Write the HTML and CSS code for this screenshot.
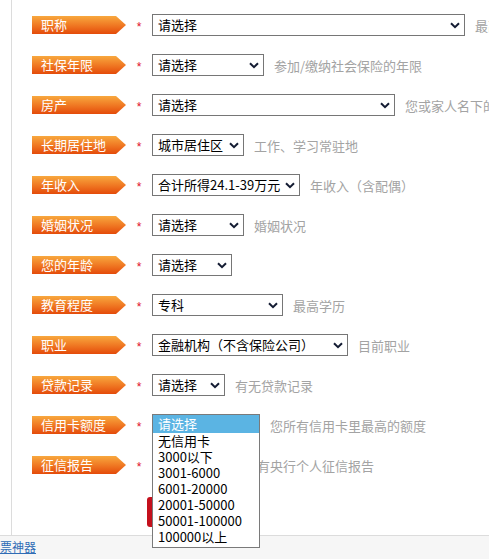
FILE: index.html
```html
<!DOCTYPE html>
<html lang="zh-CN">
<head>
<meta charset="utf-8">
<title>申请信息</title>
<link rel="stylesheet" href="styles.css">
</head>
<body>
<div class="page">
  <form class="form">
    <div class="row">
      <span class="tag">职称</span><span class="star">*</span>
      <select class="sel w313"><option>请选择</option></select>
      <span class="hint">最高职称</span>
    </div>
    <div class="row">
      <span class="tag">社保年限</span><span class="star">*</span>
      <select class="sel w112"><option>请选择</option></select>
      <span class="hint">参加/缴纳社会保险的年限</span>
    </div>
    <div class="row">
      <span class="tag">房产</span><span class="star">*</span>
      <select class="sel w243"><option>请选择</option></select>
      <span class="hint">您或家人名下的房产</span>
    </div>
    <div class="row">
      <span class="tag">长期居住地</span><span class="star">*</span>
      <select class="sel w92"><option>城市居住区</option></select>
      <span class="hint">工作、学习常驻地</span>
    </div>
    <div class="row">
      <span class="tag">年收入</span><span class="star">*</span>
      <select class="sel w148"><option>合计所得24.1-39万元</option></select>
      <span class="hint">年收入（含配偶）</span>
    </div>
    <div class="row">
      <span class="tag">婚姻状况</span><span class="star">*</span>
      <select class="sel w92"><option>请选择</option></select>
      <span class="hint">婚姻状况</span>
    </div>
    <div class="row">
      <span class="tag">您的年龄</span><span class="star">*</span>
      <select class="sel w80"><option>请选择</option></select>
    </div>
    <div class="row">
      <span class="tag">教育程度</span><span class="star">*</span>
      <select class="sel w131"><option>专科</option></select>
      <span class="hint">最高学历</span>
    </div>
    <div class="row">
      <span class="tag">职业</span><span class="star">*</span>
      <select class="sel w196"><option>金融机构（不含保险公司）</option></select>
      <span class="hint">目前职业</span>
    </div>
    <div class="row">
      <span class="tag">贷款记录</span><span class="star">*</span>
      <select class="sel w73"><option>请选择</option></select>
      <span class="hint">有无贷款记录</span>
    </div>
    <div class="row">
      <span class="tag">信用卡额度</span><span class="star">*</span>
      <span class="selwrap">
        <select class="sel w108"><option>请选择</option></select>
        <ul class="listbox">
          <li class="active">请选择</li>
          <li>无信用卡</li>
          <li>3000以下</li>
          <li>3001-6000</li>
          <li>6001-20000</li>
          <li>20001-50000</li>
          <li>50001-100000</li>
          <li>100000以上</li>
        </ul>
      </span>
      <span class="hint">您所有信用卡里最高的额度</span>
    </div>
    <div class="row">
      <span class="tag">征信报告</span><span class="star">*</span>
      <select class="sel w69"><option>请选择</option></select>
      <span class="hint">是否有央行个人征信报告</span>
    </div>
    <div class="actions">
      <button type="button" class="submit" aria-label="提交"></button>
    </div>
  </form>
</div>
<div class="footer"><a href="#" class="flink">票神器</a></div>
</body>
</html>
```

FILE: styles.css
```css
html, body {
  margin: 0;
  padding: 0;
  background: #fff;
  overflow: hidden;
  width: 489px;
  height: 559px;
}
body {
  font-family: "Noto Sans CJK SC", "Liberation Sans", sans-serif;
  font-size: 13px;
  color: #000;
}
.page {
  margin-left: 11px;
  border-left: 1px solid #dcdcdc;
  height: 535px;
  box-sizing: border-box;
}
.form {
  display: flex;
  flex-direction: column;
  gap: 18px;
  padding: 14px 0 0 20px;
  margin: 0;
}
.row {
  display: flex;
  align-items: center;
  height: 22px;
  white-space: nowrap;
}
.tag {
  flex: none;
  width: 94px;
  height: 18px;
  box-sizing: border-box;
  padding-left: 9px;
  line-height: 18px;
  font-size: 13px;
  color: #fff;
  background: linear-gradient(to bottom, #f8a83e 0%, #f07a24 50%, #e44b0a 100%);
  clip-path: polygon(0 0, 84px 0, 94px 50%, 84px 100%, 0 100%);
}
.star {
  flex: none;
  width: 26px;
  text-align: center;
  color: #e0102a;
  font-family: "Liberation Sans", sans-serif;
  font-size: 12px;
  line-height: 12px;
  align-self: center;
  margin-top: 3px;
}
.sel {
  flex: none;
  -webkit-appearance: none;
  appearance: none;
  height: 22px;
  box-sizing: border-box;
  margin: 0;
  border: 1px solid #767676;
  border-radius: 0;
  padding: 0 18px 0 5px;
  background: #fff url("data:image/svg+xml,%3Csvg xmlns='http://www.w3.org/2000/svg' width='10' height='7' viewBox='0 0 10 7'%3E%3Cpath d='M1 1.2 L5 5.2 L9 1.2' fill='none' stroke='%23141c33' stroke-width='2'/%3E%3C/svg%3E") no-repeat right 4px center;
  font-family: "Noto Sans CJK SC", "Liberation Sans", sans-serif;
  font-size: 13px;
  line-height: 20px;
  color: #000;
}
.w313 { width: 313px; }
.w112 { width: 112px; }
.w243 { width: 243px; }
.w92 { width: 92px; }
.w148 { width: 148px; }
.w80 { width: 80px; }
.w131 { width: 131px; }
.w196 { width: 196px; }
.w73 { width: 73px; }
.w108 { width: 108px; }
.w69 { width: 69px; }
.hint {
  margin-left: 10px;
  color: #a3a3a3;
  font-size: 13px;
}
.selwrap {
  position: relative;
  display: flex;
  flex: none;
}
.listbox {
  position: absolute;
  top: 0;
  left: 0;
  z-index: 5;
  width: 108px;
  box-sizing: border-box;
  margin: 0;
  padding: 0 0 2px 0;
  list-style: none;
  background: #fff;
  border: 1px solid #7a7a7a;
}
.listbox li {
  height: 16px;
  line-height: 16px;
  padding-left: 5px;
  font-size: 13px;
  color: #000;
}
.listbox li.active {
  height: 18px;
  line-height: 18px;
  background: #5bb4e3;
  color: #fff;
}
.actions {
  display: flex;
  padding-left: 115px;
  margin-top: 3px;
}
.submit {
  width: 110px;
  height: 30px;
  border: 0;
  border-radius: 3px;
  background: #c4101c;
}
.footer {
  height: 24px;
  box-sizing: border-box;
  border-top: 1px solid #dcdcdc;
  background: #f6f6f6;
  padding-top: 1px;
}
.flink {
  color: #2f6cb5;
  font-size: 12px;
  line-height: 20px;
  text-decoration: underline;
}
```
